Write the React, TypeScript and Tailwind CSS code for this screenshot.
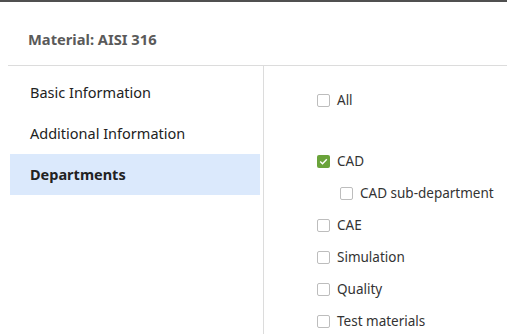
import React from "react";

function Box({ checked }: { checked?: boolean }) {
  if (checked) {
    return (
      <span className="flex h-[13px] w-[13px] items-center justify-center rounded-[2px] bg-[#6aa33a]">
        <svg width="9" height="9" viewBox="0 0 9 9" fill="none">
          <path d="M1.2 4.6 L3.5 6.8 L7.8 2.2" stroke="white" strokeWidth="1.4" />
        </svg>
      </span>
    );
  }
  return <span className="block h-[13px] w-[13px] rounded-[2px] border border-[#bdbdbd] bg-white" />;
}

function Row({ label, checked, sub }: { label: string; checked?: boolean; sub?: boolean }) {
  return (
    <div className={`flex h-[32px] items-center gap-[7px] ${sub ? "pl-[23px]" : ""}`}>
      <Box checked={checked} />
      <span className="text-[13.5px] text-[#333]">{label}</span>
    </div>
  );
}

export default function App() {
  return (
    <div className="h-[334px] w-[507px] overflow-hidden bg-white" style={{ fontFamily: '"Noto Sans", "Open Sans", sans-serif' }}>
      <div className="h-[2px] bg-[#505050]" />
      <div className="flex h-[63px] items-center pl-[28px] pt-[12px]">
        <span className="text-[14.7px] font-bold text-[#5a5a5a]">Material: AISI 316</span>
      </div>
      <div className="ml-[8px] flex border-t border-[#dcdcdc]">
        <div className="h-[280px] w-[256px] border-r border-[#dcdcdc] pl-[2px] pr-[3px] pt-[6px]">
          <div className="flex h-[41px] items-center pl-[20px] text-[14.5px] text-[#222]">Basic Information</div>
          <div className="flex h-[41px] items-center pl-[20px] text-[14.5px] text-[#222]">Additional Information</div>
          <div className="flex h-[41px] items-center bg-[#dbe9fc] pl-[20px] text-[14.5px] font-bold text-[#222]">Departments</div>
        </div>
        <div className="flex-1 pl-[53px] pt-[18px]">
          <Row label="All" />
          <div className="h-[29px]" />
          <Row label="CAD" checked />
          <Row label="CAD sub-department" sub />
          <Row label="CAE" />
          <Row label="Simulation" />
          <Row label="Quality" />
          <Row label="Test materials" />
        </div>
      </div>
    </div>
  );
}
